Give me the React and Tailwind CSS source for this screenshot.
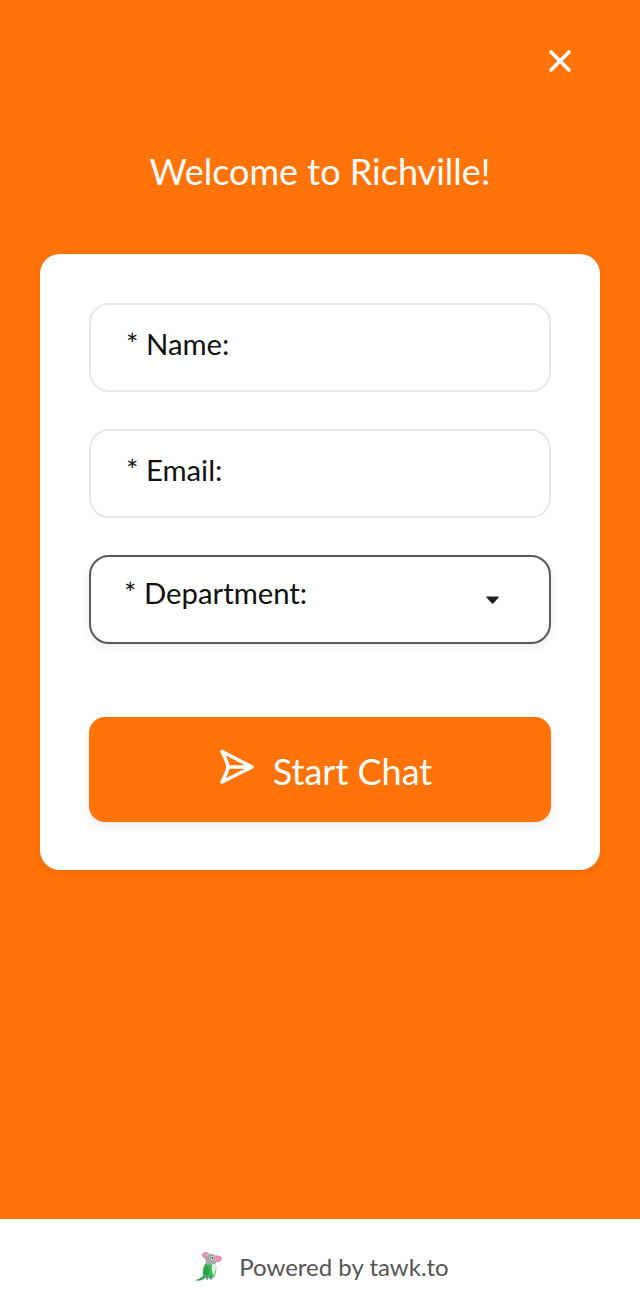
import React from 'react';

const Field = ({ label, active, children }) => (
  <div
    className={`h-[89px] rounded-[20px] bg-white flex items-start ${
      active
        ? 'border-2 border-[#5a5a5a] shadow-[0_3px_8px_rgba(0,0,0,0.08)] pl-[33px] pr-[50px] pt-[14px]'
        : 'border-2 border-[#e8e8e8] pl-[35px] pr-[50px] pt-[17px]'
    }`}
  >
    <span className="text-[29.3px] leading-[44px] text-[#111] flex-1">* {label}</span>
    {children}
  </div>
);

const Parrot = () => (
  <svg width="30" height="32" viewBox="0 0 30 32" className="mr-[16px]">
    <path d="M2 29 C5 28.5 8 27 11 24 L14 26 L9 29 C6 30 4 30 2 29Z" fill="#37a34f" />
    <path d="M10 25 C9 20 10 15 13 12 L22 11 C24 16 24 23 20 27 C16 28 12 27 10 25Z" fill="#3fb85c" />
    <path d="M13 14 C16 16 17 21 15 25 C13 25 11 24 11 22 C11 19 12 16 13 14Z" fill="#2f9e4b" />
    <path d="M19 13 L22.5 12 C23.5 16 23 21 20.5 25 C19 21 18.5 17 19 13Z" fill="#e4f3e4" />
    <path d="M12 7 C13 3 20 1 22 5 L23 12 C20 14 15 14 13 13Z" fill="#a5aaa4" />
    <path d="M9 4 C9 1 14 0 16 2.5 C14 3 12.5 5 12.5 8 C11 7 9 6 9 4Z" fill="#e58fb4" />
    <path d="M21 5 C23 3.5 28 4 29 7 C29 10 26 12 23 11 C23 9 22 7 21 5Z" fill="#ea8fb6" />
    <circle cx="19.5" cy="7" r="1.8" fill="#fff" />
    <circle cx="19.5" cy="7" r="1" fill="#222" />
    <path d="M14 26 L14 29 M18 26 L18 29" stroke="#555" strokeWidth="1" />
  </svg>
);

export default function App() {
  return (
    <div className="h-[1316px] w-[640px] flex flex-col font-['Lato','Noto_Sans',sans-serif] bg-[#ff7308]">
      <div className="flex-1 px-[40px]">
        <div className="flex justify-end pt-[44px] pr-[23px]">
          <svg width="34" height="34" viewBox="0 0 34 34" fill="none" stroke="#fff" strokeWidth="3.6" strokeLinecap="round">
            <path d="M8 8 L26 26 M26 8 L8 26" />
          </svg>
        </div>
        <h1 className="mt-[71px] text-center text-[36px] leading-[44px] text-white font-normal">
          Welcome to Richville!
        </h1>
        <div className="mt-[61px] h-[616px] rounded-[20px] bg-white px-[49px] pt-[49px] shadow-[0_4px_10px_rgba(0,0,0,0.06)]">
          <div className="flex flex-col gap-[37px]">
            <Field label="Name:" />
            <Field label="Email:" />
            <Field label="Department:" active>
              <svg width="14" height="10" viewBox="0 0 16 10" className="mt-[24px] mr-[-1px]">
                <path d="M1 1 H14 Q15 1 14.4 2 L8.6 8.6 Q7.5 9.5 6.4 8.6 L0.6 2 Q0 1 1 1Z" fill="#1f1f1f" />
              </svg>
            </Field>
          </div>
          <button className="mt-[73px] w-full h-[105px] rounded-[16px] bg-[#ff7308] flex items-center justify-center pl-[9px] pt-[2px] shadow-[0_4px_10px_rgba(0,0,0,0.08)] text-white text-[36px] leading-[44px]">
            <svg width="38" height="38" viewBox="0 0 38 38" fill="none" stroke="#fff" strokeWidth="3.6" strokeLinejoin="round" strokeLinecap="round" className="mr-[18px] mt-[-8px]">
              <path d="M5 3.5 L35 19 L5 34 C5.5 33 11 22 11 19 C11 16 5.5 4.5 5 3.5Z M11 19 L35 19" />
            </svg>
            <span>Start Chat</span>
          </button>
        </div>
      </div>
      <div className="h-[97px] bg-white flex items-center justify-center text-[24px] text-[#555] pl-[2px] pb-[2px]">
        <Parrot />
        <span>Powered by tawk.to</span>
      </div>
    </div>
  );
}
